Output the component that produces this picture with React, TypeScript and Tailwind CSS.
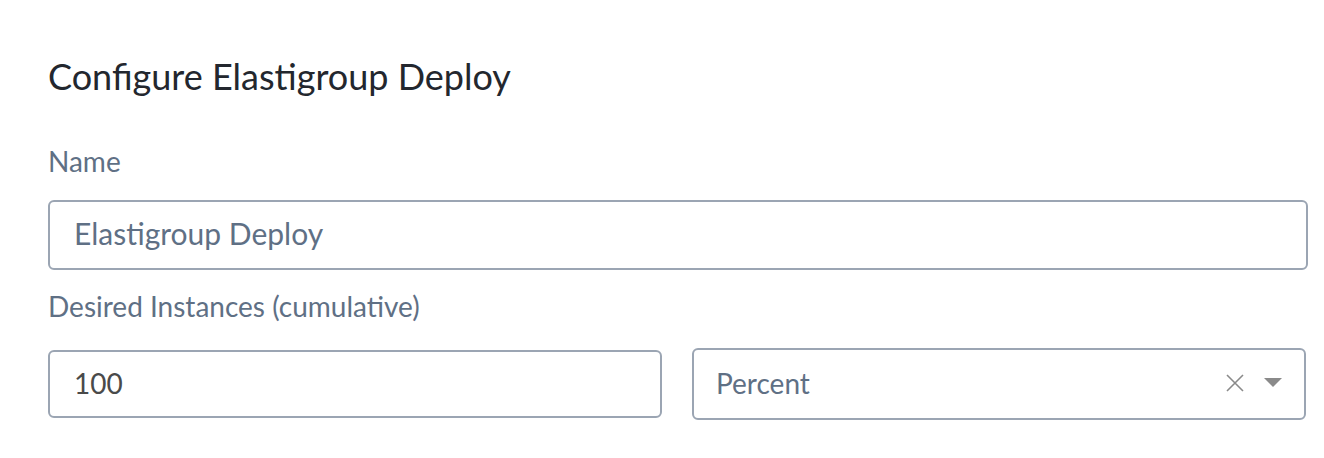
import React from "react";

const font = { fontFamily: "Lato, 'Noto Sans', sans-serif" };

export default function App() {
  return (
    <div
      className="w-[1324px] h-[458px] bg-white pl-[48px] pr-[16px] pt-[54px]"
      style={font}
    >
      <h1 className="text-[36px] leading-[44px] text-[#23272e] font-normal">
        Configure Elastigroup Deploy
      </h1>

      <label className="block mt-[46px] text-[28px] leading-[34px] text-[#5f7085]">
        Name
      </label>
      <div className="mt-[22px] h-[70px] w-[1260px] rounded-[6px] border-2 border-[#9ba5b3] flex items-center px-[24px] pb-[4px]">
        <span className="text-[30px] leading-[36px] text-[#5f7085]">
          Elastigroup Deploy
        </span>
      </div>

      <label className="block mt-[19px] text-[28px] leading-[34px] text-[#5f7085]">
        Desired Instances (cumulative)
      </label>
      <div className="mt-[25px] flex items-center gap-[30px]">
        <div className="h-[68px] w-[614px] rounded-[6px] border-2 border-[#9ba5b3] flex items-center px-[24px] pb-[2px]">
          <span className="text-[28px] leading-[34px] text-[#4a4a4a]">100</span>
        </div>
        <div className="h-[72px] w-[614px] rounded-[6px] border-2 border-[#9ba5b3] flex items-center pl-[22px] pr-[22px] pb-[2px]">
          <span className="text-[28px] leading-[34px] text-[#5f7085] flex-1">
            Percent
          </span>
          <svg width="18" height="18" viewBox="0 0 18 18" className="mr-[20px]">
            <path d="M1 1 L17 17 M17 1 L1 17" stroke="#8a8a8a" strokeWidth="1.6" />
          </svg>
          <svg width="18" height="10" viewBox="0 0 18 10">
            <path d="M0 0 H18 L9 9 Z" fill="#8a8a8a" />
          </svg>
        </div>
      </div>
    </div>
  );
}
